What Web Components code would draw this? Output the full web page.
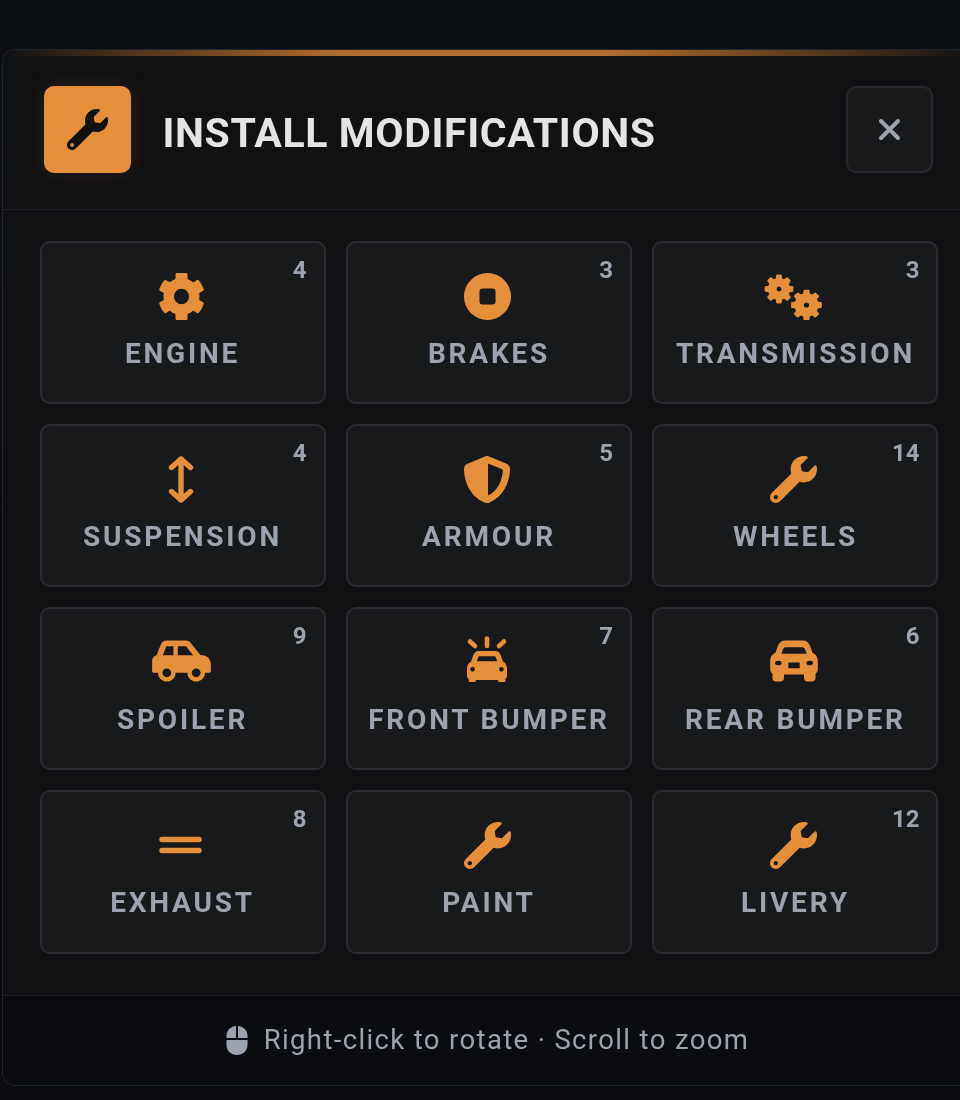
<!DOCTYPE html>
<html>
<head>
<meta charset="utf-8">
<title>Install Modifications</title>
<style>
  html, body { margin: 0; height: 100%; overflow: hidden; background: #0a0c10; }
  body { background: linear-gradient(180deg, #0c0f14 0, #0a0b0e 100%); font-family: Roboto, "Liberation Sans", sans-serif; }
</style>
</head>
<body>
<mod-panel heading="INSTALL MODIFICATIONS">
  <mod-card count="4"><mod-icon slot="icon" name="gear"></mod-icon>ENGINE</mod-card>
  <mod-card count="3"><mod-icon slot="icon" name="disc"></mod-icon>BRAKES</mod-card>
  <mod-card count="3"><mod-icon slot="icon" name="gears"></mod-icon>TRANSMISSION</mod-card>
  <mod-card count="4"><mod-icon slot="icon" name="updown"></mod-icon>SUSPENSION</mod-card>
  <mod-card count="5"><mod-icon slot="icon" name="shield"></mod-icon>ARMOUR</mod-card>
  <mod-card count="14"><mod-icon slot="icon" name="wrench"></mod-icon>WHEELS</mod-card>
  <mod-card count="9"><mod-icon slot="icon" name="carside"></mod-icon>SPOILER</mod-card>
  <mod-card count="7"><mod-icon slot="icon" name="caron"></mod-icon>FRONT BUMPER</mod-card>
  <mod-card count="6"><mod-icon slot="icon" name="carfront"></mod-icon>REAR BUMPER</mod-card>
  <mod-card count="8"><mod-icon slot="icon" name="equals"></mod-icon>EXHAUST</mod-card>
  <mod-card><mod-icon slot="icon" name="wrench"></mod-icon>PAINT</mod-card>
  <mod-card count="12"><mod-icon slot="icon" name="wrench"></mod-icon>LIVERY</mod-card>
  <span slot="hint">Right-click to rotate · Scroll to zoom</span>
</mod-panel>

<script>
// 8 lobe gear for the transmission icon
function gearPath(cx, cy, R, r, teeth, hole) {
    const pts = [];
    const step = Math.PI * 2 / teeth;
    for (let i = 0; i < teeth; i++) {
        const a = i * step;
        [[-0.3, r], [-0.17, R], [0.17, R], [0.3, r]].forEach(([k, rad]) => {
            const t = a + k * step;
            pts.push((cx + Math.cos(t) * rad).toFixed(2) + ' ' + (cy + Math.sin(t) * rad).toFixed(2));
        });
    }
    return `M${pts.join('L')}Z M${cx - hole} ${cy}a${hole} ${hole} 0 1 0 ${hole * 2} 0a${hole} ${hole} 0 1 0 ${-hole * 2} 0Z`;
}

const WRENCH = 'M507.73 109.1c-2.24-9.03-13.54-12.09-20.12-5.51l-74.36 74.36-67.88-11.31-11.31-67.88 74.36-74.36c6.62-6.62 3.43-17.9-5.66-20.16-47.38-11.74-99.55.91-136.58 37.93-39.64 39.64-50.55 97.1-34.05 147.2L18.74 402.76c-24.99 24.99-24.99 65.51 0 90.5 24.99 24.99 65.51 24.99 90.5 0l213.21-213.21c50.12 16.71 107.47 5.68 147.37-34.22 37.07-37.07 49.7-89.32 37.91-136.73zM64 472c-13.25 0-24-10.75-24-24 0-13.26 10.75-24 24-24s24 10.74 24 24c0 13.25-10.75 24-24 24z';

const ICONS = {
    wrench: `<svg width="47" height="47" viewBox="0 0 512 512"><path fill="currentColor" d="${WRENCH}"/></svg>`,
    gear: `<svg width="45" height="47" viewBox="16 14 480 484" preserveAspectRatio="none"><path fill="currentColor" d="M487.4 315.7l-42.6-24.6c4.3-23.2 4.3-47 0-70.2l42.6-24.6c4.9-2.8 7.1-8.6 5.5-14-11.1-35.6-30-67.8-54.7-94.6-3.8-4.1-10-5.1-14.8-2.3L380.8 110c-17.9-15.4-38.5-27.3-60.8-35.1V25.8c0-5.6-3.9-10.5-9.4-11.7-36.7-8.2-74.3-7.8-109.2 0-5.5 1.2-9.4 6.1-9.4 11.7V75c-22.2 7.9-42.8 19.8-60.8 35.1L88.7 85.5c-4.9-2.8-11-1.9-14.8 2.3-24.7 26.7-43.6 58.9-54.7 94.6-1.7 5.4.6 11.2 5.5 14L67.3 221c-4.3 23.2-4.3 47 0 70.2l-42.6 24.6c-4.9 2.8-7.1 8.6-5.5 14 11.1 35.6 30 67.8 54.7 94.6 3.8 4.1 10 5.1 14.8 2.3l42.6-24.6c17.9 15.4 38.5 27.3 60.8 35.1v49.2c0 5.6 3.9 10.5 9.4 11.7 36.7 8.2 74.3 7.8 109.2 0 5.5-1.2 9.4-6.1 9.4-11.7v-49.2c22.2-7.9 42.8-19.8 60.8-35.1l42.6 24.6c4.9 2.8 11 1.9 14.8-2.3 24.7-26.7 43.6-58.9 54.7-94.6 1.5-5.5-.7-11.3-5.6-14.1zM256 336c-44.1 0-80-35.9-80-80s35.9-80 80-80 80 35.9 80 80-35.9 80-80 80z"/></svg>`,
    disc: `<svg width="47" height="47" viewBox="0.5 0 47 47"><path fill="currentColor" fill-rule="evenodd" d="M24 0a23.5 23.5 0 1 0 0 47a23.5 23.5 0 1 0 0-47ZM19 15.5h10a3 3 0 0 1 3 3v10a3 3 0 0 1-3 3H19a3 3 0 0 1-3-3v-10a3 3 0 0 1 3-3Z"/></svg>`,
    gears: `<svg width="60" height="47" viewBox="0 0 60 47"><g fill="currentColor" stroke="currentColor" stroke-width="2" stroke-linejoin="round" fill-rule="evenodd"><path d="${gearPath(15, 16, 13.5, 10.2, 8, 3.4)}"/><path d="${gearPath(42.5, 32, 14.5, 11, 8, 3.6)}"/></g></svg>`,
    updown: `<svg width="30" height="47" viewBox="0 0 30 47"><path fill="none" stroke="currentColor" stroke-width="5.4" stroke-linecap="round" stroke-linejoin="round" d="M5.5 11.5L15 3L24.5 11.5M15 3V44M5.5 35.5L15 44L24.5 35.5"/></svg>`,
    shield: `<svg width="46" height="47" viewBox="0 0 46 47"><path fill="currentColor" fill-rule="evenodd" d="M23 0c.7 0 1.3.1 2 .4l17.500 7.400c2 .9 3.500 2.800 3.500 5.100c-.1 9.500-4 26.500-20.500 33.500c-1.600.7-3.400.7-5 0C4 39.400.1 22.400 0 12.900c0-2.300 1.500-4.200 3.500-5.100L21 .4C21.700.1 22.300 0 23 0ZM24 7.600V39.500C35.500 33.700 38.700 21.700 38.800 13.400Z"/></svg>`,
    carside: `<svg width="59" height="47" viewBox="0 16 640 512"><path fill="currentColor" d="M544 192h-16L419.22 56.020A64.025 64.025 0 0 0 369.240 32H155.330c-26.170 0-49.700 15.930-59.420 40.230L48 194.260C20.440 201.400 0 226.210 0 256v112c0 8.840 7.160 16 16 16h48c0 53.020 42.980 96 96 96s96-42.980 96-96h128c0 53.020 42.980 96 96 96s96-42.980 96-96h48c8.840 0 16-7.160 16-16v-80c0-53.020-42.980-96-96-96zM160 432c-26.470 0-48-21.530-48-48s21.530-48 48-48 48 21.530 48 48-21.530 48-48 48zm72-240H116.910l38.400-96H232v96zm48 0V96h89.240l76.800 96H280zm200 240c-26.470 0-48-21.530-48-48s21.530-48 48-48 48 21.530 48 48-21.530 48-48 48z"/></svg>`,
    carfront: `<svg width="48" height="47" viewBox="0 0 48 47"><path fill="currentColor" fill-rule="evenodd" d="M15 1.500H33C36 1.500 38.500 3.300 39.700 6L42.500 13.500C45.500 15 47.800 18 47.800 21.500V30C47.800 32 47 33.600 45.500 34.800V39C45.500 41.200 44 42.500 42 42.500H37.500C35.500 42.500 34 41.200 34 39V35.500H14V39C14 41.200 12.500 42.500 10.500 42.500H6C4 42.500 2.500 41.200 2.500 39V34.800C1 33.600.2 32 .2 30V21.500C.2 18 2.500 15 5.500 13.500L8.300 6C9.500 3.300 12 1.500 15 1.500ZM15.800 8.200C14.500 8.200 13.700 8.900 13.300 9.800L11.200 14.700H36.800L34.700 9.800C34.300 8.900 33.500 8.200 32.200 8.200ZM5 24a3.300 2.300 0 1 0 6.600 0a3.300 2.300 0 1 0-6.600 0ZM36.400 24a3.300 2.300 0 1 0 6.600 0a3.300 2.300 0 1 0-6.600 0ZM18.300 23.500H29.700V29.200H18.300Z"/></svg>`,
    caron: `<svg width="46" height="47" viewBox="0 0 46 47" style="overflow:visible"><path fill="none" stroke="currentColor" stroke-width="4.600" stroke-linecap="round" d="M23 -.5V7M6 2.500L11 7M40 2.500L35 7"/><path transform="translate(0,-6.4) scale(1,1.05)" fill="currentColor" fill-rule="evenodd" d="M14.500 17.500H31.500C33.800 17.500 35.700 18.900 36.500 21L39 27.500C41.300 28.700 43 31.100 43 34V41C43 42.400 42.400 43.600 41.300 44.400V46C41.300 47 40.500 47 39.500 47H36C35 47 34.200 47 34.200 46V45.200H11.800V46C11.800 47 11 47 10 47H6.500C5.500 47 4.700 47 4.700 46V44.400C3.600 43.600 3 42.400 3 41V34C3 31.100 4.700 28.700 7 27.500L9.500 21C10.300 18.900 12.200 17.500 14.500 17.500ZM16 22.500C15 22.500 14.500 23 14.100 23.800L12.800 27.400H33.200L31.900 23.800C31.500 23 31 22.500 30 22.500ZM6.300 35a2.300 2.300 0 1 0 4.600 0a2.300 2.300 0 1 0-4.600 0ZM35.100 35a2.300 2.300 0 1 0 4.600 0a2.300 2.300 0 1 0-4.600 0Z"/></svg>`,
    equals: `<svg width="44" height="47" viewBox="0 0 44 47"><path fill="none" stroke="currentColor" stroke-width="5.400" stroke-linecap="round" d="M3 17.500H40M3 28.500H40"/></svg>`
};

class ModIcon extends HTMLElement {
    constructor() {
        super();
        this.attachShadow({ mode: 'open' });
    }
    connectedCallback() {
        this.shadowRoot.innerHTML = `
      <style>
        :host { display: flex; align-items: center; justify-content: center; line-height: 0; }
        svg { display: block; }
      </style>
      ${ICONS[this.getAttribute('name')] || ''}`;
    }
}
customElements.define('mod-icon', ModIcon);

class ModCard extends HTMLElement {
    constructor() {
        super();
        this.attachShadow({ mode: 'open' });
    }
    connectedCallback() {
        const count = this.getAttribute('count');
        this.shadowRoot.innerHTML = `
      <style>
        :host {
          display: flex;
          position: relative;
          flex-direction: column;
          align-items: center;
          box-sizing: border-box;
          padding-top: 30px;
          background: #18191b;
          border: 2px solid #292b2e;
          border-radius: 10px;
          color: #9ca3af;
        }
        .icon { color: #e68f3a; height: 47px; margin-right: 3px; }
        .label {
          margin-top: 16.5px;
          font: 700 28px/36px Roboto, sans-serif;
          letter-spacing: 2.8px;
          white-space: nowrap;
        }
        .count {
          position: absolute;
          top: 14px;
          right: 17px;
          font: 700 24px/26px Roboto, sans-serif;
        }
      </style>
      <div class="icon"><slot name="icon"></slot></div>
      <div class="label"><slot></slot></div>
      ${count ? `<div class="count">${count}</div>` : ''}`;
    }
}
customElements.define('mod-card', ModCard);

class ModPanel extends HTMLElement {
    constructor() {
        super();
        this.attachShadow({ mode: 'open' });
    }
    connectedCallback() {
        this.shadowRoot.innerHTML = `
      <style>
        :host {
          display: block;
          position: relative;
          box-sizing: border-box;
          width: 973px;
          margin: 49px 0 0 2px;
          background: #101113;
          border: 1.5px solid #22252a;
          border-radius: 12px;
          overflow: hidden;
          filter: blur(.45px);
        }
        .accent {
          position: absolute;
          top: 0; left: 0; right: 0;
          height: 6px;
          background: linear-gradient(90deg, transparent 0, #b06d2e 35%, #b06d2e 62%, transparent 100%);
        }
        header {
          display: flex;
          align-items: center;
          padding: 35.500px 41.500px 36px 39.500px;
          border-bottom: 1.5px solid #1e2023;
        }
        .badge {
          display: flex;
          align-items: center;
          justify-content: center;
          width: 87px;
          height: 87px;
          margin-left: 1px;
          border-radius: 10px;
          background: #e68f3a;
          color: #111;
          box-shadow: 0 0 26px rgba(232, 143, 56, .12);
        }
        h1 {
          flex: 1;
          margin: 7px 0 0 32px;
          font: 700 41px/48px Roboto, sans-serif;
          letter-spacing: .6px;
          color: #e4e4e4;
        }
        .close {
          display: flex;
          align-items: center;
          justify-content: center;
          box-sizing: border-box;
          width: 87px;
          height: 87px;
          background: #18191b;
          border: 2px solid #26282b;
          border-radius: 10px;
          color: #9ca3af;
        }
        .grid {
          display: grid;
          grid-template-columns: repeat(3, 1fr);
          grid-auto-rows: 163.8px;
          gap: 19.3px 20.4px;
          padding: 31px 35.500px 41px 36.500px;
        }
        footer {
          display: flex;
          align-items: center;
          justify-content: center;
          gap: 16px;
          height: 89px;
          padding-right: 2px;
          background: #0b0c0f;
          border-top: 1.5px solid #1e2023;
          color: #9ca3af;
          font: 400 27.500px/34px Roboto, sans-serif;
          letter-spacing: 1.36px;
        }
      </style>
      <div class="accent"></div>
      <header>
        <div class="badge">
          <svg width="41" height="41" viewBox="0 0 512 512"><path fill="currentColor" d="${WRENCH}"/></svg>
        </div>
        <h1>${this.getAttribute('heading')}</h1>
        <div class="close">
          <svg width="23" height="23" viewBox="0 0 23 23"><path fill="none" stroke="currentColor" stroke-width="4" stroke-linecap="round" d="M3 3L20 20M20 3L3 20"/></svg>
        </div>
      </header>
      <div class="grid"><slot></slot></div>
      <footer>
        <svg width="22" height="29" viewBox="0 0 22 29"><path fill="currentColor" d="M10 0V12H.5V9.500C.5 4.500 4.500.5 10 0ZM12 0C17.500.5 21.500 4.500 21.500 9.500V12H12ZM.5 14H21.500V19C21.500 24.800 17 29 11 29S.5 24.800.5 19Z"/></svg>
        <slot name="hint"></slot>
      </footer>`;
    }
}
customElements.define('mod-panel', ModPanel);
</script>
</body>
</html>
